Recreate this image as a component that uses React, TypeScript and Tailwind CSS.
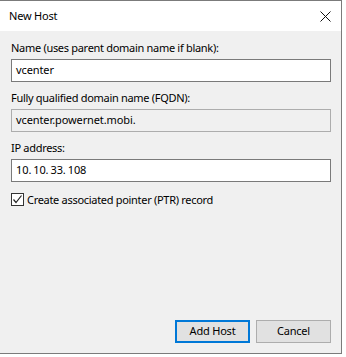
import React from 'react';

const font = { fontFamily: '"Noto Sans", "Open Sans", sans-serif' };

function Field({ label, value, readOnly }: { label: string; value: React.ReactNode; readOnly?: boolean }) {
  return (
    <div className="flex flex-col">
      <div className="h-[16px] leading-[16px] text-[11px] tracking-[-0.3px] text-black mb-[3px]">{label}</div>
      <div
        className={
          'h-[23px] border flex items-center pl-[4px] text-[11px] tracking-[-0.1px] text-black ' +
          (readOnly ? 'bg-[#f0f0f0] border-[#adadad]' : 'bg-white border-[#7a7a7a]')
        }
      >
        {value}
      </div>
    </div>
  );
}

export default function App() {
  return (
    <div className="w-[346px] h-[357px] bg-white" style={font}>
      <div className="w-[342px] h-[354px] border-t border-r border-b border-[#7b7b7b] flex flex-col bg-[#f0f0f0]">
        <div className="h-[30px] bg-white flex items-center justify-between pl-[9px] pr-[10px]">
          <span className="text-[11px] tracking-[-0.2px] text-black">New Host</span>
          <svg width="11" height="11" viewBox="0 0 11 11">
            <path d="M0.5 0.5 L10.5 10.5 M10.5 0.5 L0.5 10.5" stroke="#111" strokeWidth="1" />
          </svg>
        </div>
        <div className="flex-1 flex flex-col pl-[11px] pr-[10px] pt-[9px] pb-[10px]">
          <div className="flex flex-col gap-[8px]">
            <Field label="Name (uses parent domain name if blank):" value="vcenter" />
            <Field label="Fully qualified domain name (FQDN):" value="vcenter.powernet.mobi." readOnly />
            <Field
              label="IP address:"
              value={
                <span className="flex">
                  <span>10.</span>
                  <span className="ml-[2px]">10.</span>
                  <span className="ml-[2px]">33.</span>
                  <span className="ml-[2px]">108</span>
                </span>
              }
            />
          </div>
          <div className="flex items-center mt-[11px] h-[13px]">
            <div className="w-[13px] h-[13px] border border-[#333333] bg-white flex items-center justify-center">
              <svg width="11" height="11" viewBox="0 0 11 11">
                <path d="M1.5 5.5 L4 8.5 L9.5 1.5" stroke="#222" strokeWidth="1.2" fill="none" />
              </svg>
            </div>
            <span className="ml-[3px] text-[11px] tracking-[-0.3px] text-black leading-[16px]">
              Create associated pointer (PTR) record
            </span>
          </div>
          <div className="flex-1" />
          <div className="flex justify-end gap-[6px]">
            <button className="w-[75px] h-[23px] bg-[#e1e1e1] border-2 border-[#0078d7] text-[11px] tracking-[-0.2px] text-black">
              Add Host
            </button>
            <button className="w-[75px] h-[23px] bg-[#e1e1e1] border border-[#adadad] text-[11px] tracking-[-0.2px] text-black">
              Cancel
            </button>
          </div>
        </div>
      </div>
    </div>
  );
}
